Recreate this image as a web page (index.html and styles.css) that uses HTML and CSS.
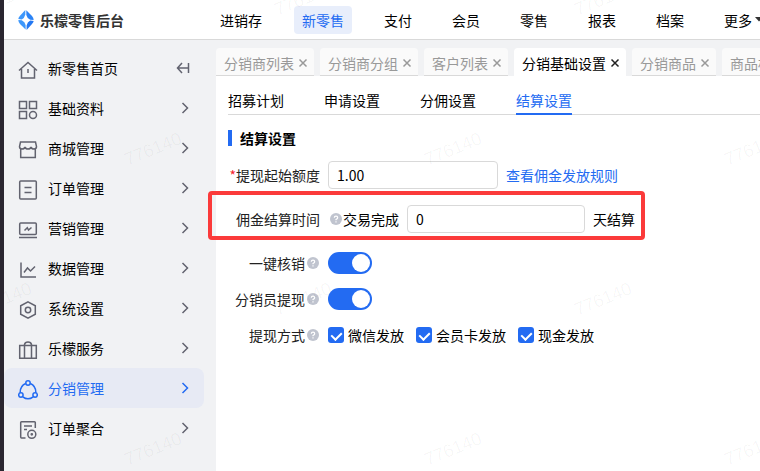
FILE: index.html
```html
<!DOCTYPE html>
<html lang="zh-CN">
    <head>
        <meta charset="utf-8" />
        <title>乐檬零售后台</title>
        <link rel="stylesheet" href="styles.css">
    </head>
    <body>
        <header class="header">
            <div class="logo">
                <svg class="logoIcon" width="16" height="20" viewBox="0 0 16 20">
                    <path fill="#3d97fb" d="M7.300 0v4.500Q6.500 8 3.800 9.500L0.300 9Q0.500 7.500 1.800 6z"/>
                    <path fill="#2b83f6" d="M8.300 0.300L14 6q1.600 1.800 1.700 4l-3.500-.2Q9 8.300 8.300 5z"/>
                    <path fill="#3d97fb" d="M0.300 10l3.500.3Q7 11.700 7.600 15v4.600L2 14Q0.400 12.200 0.300 10z"/>
                    <path fill="#2478f2" d="M15.700 11q-.3 1.600-1.700 3.100L8.600 20v-4.600q.7-3.600 3.600-5z"/>
                </svg>
                <span class="logoText">乐檬零售后台</span>
            </div>
            <nav class="nav">
                <a href="#" class="navItem">进销存</a>
                <a href="#" class="navItem active">新零售</a>
                <a href="#" class="navItem">支付</a>
                <a href="#" class="navItem">会员</a>
                <a href="#" class="navItem">零售</a>
                <a href="#" class="navItem">报表</a>
                <a href="#" class="navItem">档案</a>
                <a href="#" class="navItem more">更多<svg width="8" height="5" viewBox="0 0 8 5"><path fill="#333" d="M0 0h8L4 4.500z"/></svg></a>
            </nav>
        </header>
        <div class="page">
            <aside class="sidebar">
                <a href="#" class="menuItem">
                    <svg class="menuIcon" viewBox="0 0 20 20"><path d="M1 10.500L10 2.500l9 8M3.500 9v9h13V9M10 9v4"/></svg>
                    <span class="menuText">新零售首页</span>
                    <svg class="fold" viewBox="0 0 14 12"><path d="M6 1L1.500 6 6 11M1.500 6H12M12.500 1v10"/></svg>
                </a>
                <a href="#" class="menuItem">
                    <svg class="menuIcon" viewBox="0 0 20 20"><path d="M1.500 1.500h7v7h-7zM11.500 1.500h7v7h-7zM1.500 11.500h7v7h-7z"/><circle cx="15" cy="15" r="3.500"/></svg>
                    <span class="menuText">基础资料</span>
                    <svg class="arrow" viewBox="0 0 8 12"><path d="M1.500 1L6.500 6l-5 5"/></svg>
                </a>
                <a href="#" class="menuItem">
                    <svg class="menuIcon" viewBox="0 0 20 20"><path d="M2.500 2h15l1 4.500q0 2.500-2.500 2.500t-3-2q-.5 2-3 2t-3-2q-.5 2-3 2t-2.500-2.500zM2.700 9v8.500h14.600V9"/></svg>
                    <span class="menuText">商城管理</span>
                    <svg class="arrow" viewBox="0 0 8 12"><path d="M1.500 1L6.500 6l-5 5"/></svg>
                </a>
                <a href="#" class="menuItem">
                    <svg class="menuIcon" viewBox="0 0 20 20"><rect x="1.700" y="1" width="16.600" height="18" rx="1"/><path d="M6.500 7.500h7M6.500 12.500h7"/></svg>
                    <span class="menuText">订单管理</span>
                    <svg class="arrow" viewBox="0 0 8 12"><path d="M1.500 1L6.500 6l-5 5"/></svg>
                </a>
                <a href="#" class="menuItem">
                    <svg class="menuIcon" viewBox="0 0 20 20"><rect x="1.700" y="3" width="16.600" height="11.500" rx="1"/><path d="M1 17.500h18M6.500 10.500L9.300 7.700l1.200 2.300L13.500 7.500"/></svg>
                    <span class="menuText">营销管理</span>
                    <svg class="arrow" viewBox="0 0 8 12"><path d="M1.500 1L6.500 6l-5 5"/></svg>
                </a>
                <a href="#" class="menuItem">
                    <svg class="menuIcon" viewBox="0 0 20 20"><path d="M3 2.500v14.500h15M6 12.500l3.500-4.500 3 3L17 6.500"/></svg>
                    <span class="menuText">数据管理</span>
                    <svg class="arrow" viewBox="0 0 8 12"><path d="M1.500 1L6.500 6l-5 5"/></svg>
                </a>
                <a href="#" class="menuItem">
                    <svg class="menuIcon" viewBox="0 0 20 20"><path d="M10 1.800l7.300 4v8.400l-7.300 4-7.300-4V5.800z"/><circle cx="10" cy="10" r="2.700"/></svg>
                    <span class="menuText">系统设置</span>
                    <svg class="arrow" viewBox="0 0 8 12"><path d="M1.500 1L6.500 6l-5 5"/></svg>
                </a>
                <a href="#" class="menuItem">
                    <svg class="menuIcon" viewBox="0 0 20 20"><path d="M1.700 5.500h16.600v12.800H1.700zM6.500 18V4.500Q7 2 10 2t3.500 2.500V18"/></svg>
                    <span class="menuText">乐檬服务</span>
                    <svg class="arrow" viewBox="0 0 8 12"><path d="M1.500 1L6.500 6l-5 5"/></svg>
                </a>
                <a href="#" class="menuItem active">
                    <svg class="menuIcon" viewBox="0 0 20 20"><circle cx="10" cy="3" r="2.200"/><circle cx="2.900" cy="15" r="2.200"/><circle cx="17.100" cy="15" r="2.200"/><path d="M7.700 3.500Q2 6 2.200 12.700M12.300 3.500Q18 6 17.800 12.700M4.800 16.800Q10 20.800 15.200 16.800"/></svg>
                    <span class="menuText">分销管理</span>
                    <svg class="arrow" viewBox="0 0 8 12"><path d="M1.500 1L6.500 6l-5 5"/></svg>
                </a>
                <a href="#" class="menuItem">
                    <svg class="menuIcon" viewBox="0 0 20 20"><path d="M7.500 18H3.500Q2.700 18 2.700 17V2.500Q2.700 1.700 3.500 1.700h13q.8 0 .8.800V8M6 6h8M6 9.500h3"/><circle cx="13.800" cy="14.300" r="4"/><circle cx="13.800" cy="14.300" r=".6"/></svg>
                    <span class="menuText">订单聚合</span>
                    <svg class="arrow" viewBox="0 0 8 12"><path d="M1.500 1L6.500 6l-5 5"/></svg>
                </a>
            </aside>
            <div class="content">
                <div class="tabs">
                    <div class="tab"><a href="#">分销商列表</a><button class="close" aria-label="关闭"><svg viewBox="0 0 10 10"><path d="M1.500 1.500l7 7M8.500 1.500l-7 7"/></svg></button></div>
                    <div class="tab"><a href="#">分销商分组</a><button class="close" aria-label="关闭"><svg viewBox="0 0 10 10"><path d="M1.500 1.500l7 7M8.500 1.500l-7 7"/></svg></button></div>
                    <div class="tab"><a href="#">客户列表</a><button class="close" aria-label="关闭"><svg viewBox="0 0 10 10"><path d="M1.500 1.500l7 7M8.500 1.500l-7 7"/></svg></button></div>
                    <div class="tab active"><a href="#">分销基础设置</a><button class="close" aria-label="关闭"><svg viewBox="0 0 10 10"><path d="M1.500 1.500l7 7M8.500 1.500l-7 7"/></svg></button></div>
                    <div class="tab"><a href="#">分销商品</a><button class="close" aria-label="关闭"><svg viewBox="0 0 10 10"><path d="M1.500 1.500l7 7M8.500 1.500l-7 7"/></svg></button></div>
                    <div class="tab"><a href="#">商品标签</a><button class="close" aria-label="关闭"><svg viewBox="0 0 10 10"><path d="M1.500 1.500l7 7M8.500 1.500l-7 7"/></svg></button></div>
                </div>
                <main class="panel">
                    <nav class="subTabs">
                        <a href="#" class="subTab">招募计划</a>
                        <a href="#" class="subTab">申请设置</a>
                        <a href="#" class="subTab">分佣设置</a>
                        <a href="#" class="subTab active">结算设置</a>
                    </nav>
                    <h2 class="title">结算设置</h2>
                    <form class="form">
                        <div class="row">
                            <label class="label" for="minAmount"><span class="star">*</span>提现起始额度</label>
                            <input type="text" class="input" id="minAmount" value="1.00" />
                            <a href="#" class="link">查看佣金发放规则</a>
                        </div>
                        <div class="row highlight">
                            <label class="label" for="days">佣金结算时间</label>
                            <span class="prefix"><svg class="help" viewBox="0 0 12 12"><circle cx="6" cy="6" r="6"/><path d="M4.300 4.800Q4.300 3.200 6 3.200t1.700 1.500Q7.700 5.500 6 6.500v.7M6 8.200v1.200"/></svg>交易完成</span>
                            <input type="text" class="input days" id="days" value="0" />
                            <span>天结算</span>
                        </div>
                        <div class="row tight">
                            <label class="label" for="verify">一键核销<svg class="help" viewBox="0 0 12 12"><circle cx="6" cy="6" r="6"/><path d="M4.300 4.800Q4.300 3.200 6 3.200t1.700 1.500Q7.700 5.500 6 6.500v.7M6 8.200v1.200"/></svg></label>
                            <input type="checkbox" class="switch" id="verify" checked />
                        </div>
                        <div class="row tight">
                            <label class="label" for="withdraw">分销员提现<svg class="help" viewBox="0 0 12 12"><circle cx="6" cy="6" r="6"/><path d="M4.300 4.800Q4.300 3.200 6 3.200t1.700 1.500Q7.700 5.500 6 6.500v.7M6 8.200v1.200"/></svg></label>
                            <input type="checkbox" class="switch" id="withdraw" checked />
                        </div>
                        <div class="row tight" role="group" aria-labelledby="method">
                            <span class="label" id="method">提现方式<svg class="help" viewBox="0 0 12 12"><circle cx="6" cy="6" r="6"/><path d="M4.300 4.800Q4.300 3.200 6 3.200t1.700 1.500Q7.700 5.500 6 6.500v.7M6 8.200v1.200"/></svg></span>
                            <div class="checks">
                                <label class="check"><input type="checkbox" class="box" checked />微信发放</label>
                                <label class="check"><input type="checkbox" class="box" checked />会员卡发放</label>
                                <label class="check"><input type="checkbox" class="box" checked />现金发放</label>
                            </div>
                        </div>
                    </form>
                </main>
            </div>
        </div>
        <div class="watermark" aria-hidden="true">
            <div class="markRow shift"><span>776140</span><span>776140</span><span>776140</span></div>
            <div class="markRow"><span>776140</span><span>776140</span><span>776140</span></div>
            <div class="markRow shift"><span>776140</span><span>776140</span><span>776140</span></div>
            <div class="markRow"><span>776140</span><span>776140</span><span>776140</span></div>
        </div>
    </body>
</html>
```
FILE: styles.css
```css
* {
    box-sizing: border-box;
}

body {
    display: flex;
    flex-direction: column;
    position: relative;
    min-height: 100vh;
    margin: 0;
    border-left: 4px solid #2a2630;
    font-family: "Noto Sans CJK SC", sans-serif;
    font-size: 14px;
    line-height: 20px;
    color: #000;
    background-color: #f1f2f4;
    overflow: hidden;
}

a {
    color: inherit;
    text-decoration: none;
    white-space: nowrap;
}

svg {
    flex: none;
}

.header {
    display: flex;
    height: 40px;
    background-color: #fff;
    border-bottom: 1px solid #d9d9d9;
}

.logo {
    display: flex;
    flex: none;
    align-items: center;
    gap: 6px;
    width: 208px;
    padding-left: 14px;
}

.logoText {
    font-weight: bold;
    color: #333;
}

.nav {
    display: flex;
    align-items: center;
    gap: 24px;
}

.navItem {
    padding: 4px 8px;
    border-radius: 4px;
}

.navItem.active {
    background-color: #e8eefb;
    color: #236bf2;
}

.more {
    display: flex;
    align-items: center;
    gap: 3px;
}

.page {
    display: flex;
    flex: 1;
}

.sidebar {
    flex: none;
    width: 212px;
    padding: 8px 12px 8px 0;
}

.menuItem {
    display: flex;
    align-items: center;
    height: 40px;
    padding: 0 14px;
    border-radius: 8px;
}

.menuItem.active {
    background-color: #e7eaf4;
    color: #236bf2;
}

.menuIcon {
    width: 20px;
    height: 20px;
    margin: 3px 10px 0 0;
}

.menuIcon, .arrow, .fold, .close svg {
    fill: none;
    stroke: #62636f;
    stroke-width: 1.5;
}

.menuItem.active svg {
    stroke: #236bf2;
}

.menuText {
    flex: 1;
}

.arrow {
    width: 8px;
    height: 12px;
    margin-right: 1px;
}

.fold {
    width: 14px;
    height: 12px;
}

.content {
    display: flex;
    flex-direction: column;
    flex: 1;
    min-width: 0;
    padding-top: 8px;
}

.tabs {
    display: flex;
    gap: 6px;
    overflow: hidden;
}

.tab {
    display: flex;
    flex: none;
    align-items: center;
    gap: 4px;
    height: 28px;
    padding: 2px 6px 0 8px;
    border-bottom: 1px solid #d9d9d9;
    border-radius: 4px 4px 0 0;
    background-color: #fafafa;
    color: #999;
}

.tab.active {
    border-color: #fff;
    background-color: #fff;
    color: #000;
}

.close {
    display: flex;
    padding: 0;
    border: 0;
    background: none;
}

.close svg {
    width: 10px;
    height: 10px;
    stroke: #999;
}

.tab.active svg {
    stroke: #222;
}

.panel {
    flex: 1;
    padding: 9px 0 0 12px;
    background-color: #fff;
}

.subTabs {
    display: flex;
    gap: 40px;
    border-bottom: 1px solid #d9d9d9;
}

.subTab {
    height: 30px;
    padding-top: 5px;
    margin-bottom: -1px;
}

.subTab.active {
    border-bottom: 2px solid #236bf2;
    color: #236bf2;
}

.title {
    margin: 15px 0;
    padding-left: 8px;
    border-left: 4px solid #236bf2;
    font-size: 14px;
    line-height: 16px;
}

.form {
    display: flex;
    flex-direction: column;
    align-items: flex-start;
}

.row {
    display: flex;
    align-items: center;
    gap: 8px;
    height: 28px;
    margin-bottom: 16px;
    white-space: nowrap;
}

.tight {
    margin-bottom: 8px;
}

.label {
    display: flex;
    justify-content: flex-end;
    align-items: center;
    width: 92px;
    color: #222;
}

.star {
    color: #f5222d;
}

.input {
    width: 170px;
    height: 28px;
    padding: 0 8px;
    border: 1px solid #d9d9d9;
    border-radius: 4px;
    background-color: #fff;
    font: inherit;
    color: #000;
}

.days {
    width: 178px;
}

.link {
    color: #236bf2;
}

.prefix {
    display: flex;
    align-items: center;
}

.help {
    width: 12px;
    height: 12px;
    margin: 0 1px 0 2px;
    fill: #c0c4cf;
}

.help path {
    fill: none;
    stroke: #fff;
    stroke-width: 1.2;
}

/* red frame around the settlement time row */
.highlight {
    position: relative;
}

.highlight::after {
    content: "";
    position: absolute;
    inset: -14px -10px -7px -20px;
    border: 4px solid #fb3a3a;
    border-radius: 4px;
    pointer-events: none;
}

.switch {
    appearance: none;
    display: flex;
    justify-content: flex-end;
    width: 44px;
    height: 22px;
    margin: 0;
    padding: 2px;
    border-radius: 11px;
    background-color: #236bf2;
}

.switch::after {
    content: "";
    width: 18px;
    height: 18px;
    border-radius: 50%;
    background-color: #fff;
}

.checks {
    display: flex;
    gap: 12px;
}

.check {
    display: flex;
    align-items: center;
    gap: 4px;
}

.box {
    appearance: none;
    display: flex;
    justify-content: center;
    width: 16px;
    height: 16px;
    margin: 0;
    padding-top: 3px;
    border-radius: 3px;
    background-color: #236bf2;
}

.box::after {
    content: "";
    width: 5px;
    height: 8px;
    border: solid #fff;
    border-width: 0 2px 2px 0;
    transform: rotate(45deg);
}

.watermark {
    position: absolute;
    inset: -76px 0 0 -4px;
    overflow: hidden;
    font-family: "Liberation Sans", sans-serif;
    font-size: 18px;
    color: rgba(0, 0, 0, 0.04);
    pointer-events: none;
}

.markRow {
    display: flex;
    align-items: center;
    height: 150px;
    margin-left: 3px;
}

.markRow.shift {
    margin-left: -147px;
}

.markRow span {
    flex: none;
    width: 300px;
    text-align: center;
    transform: rotate(-22deg);
}
```
